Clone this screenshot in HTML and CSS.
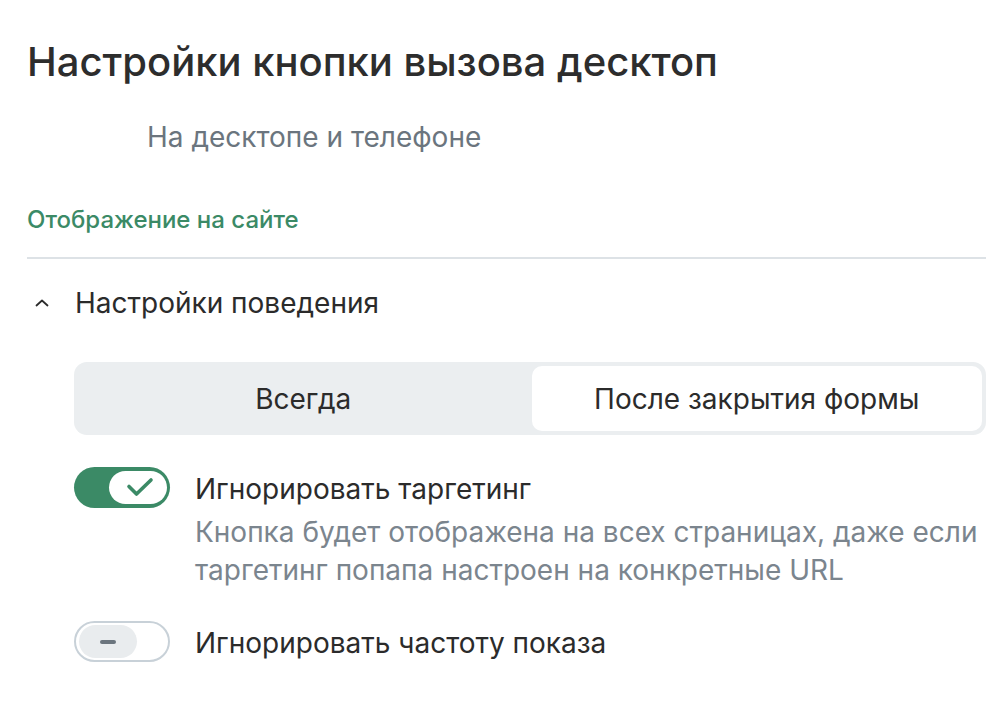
FILE: index.html
```html
<!DOCTYPE html>
<html lang="ru">
<head>
<meta charset="utf-8">
<title>Настройки кнопки вызова десктоп</title>
<link rel="stylesheet" href="styles.css">
</head>
<body>
<main class="page">
  <h1 class="title">Настройки кнопки вызова десктоп</h1>
  <p class="subtitle">На десктопе и телефоне</p>
  <a class="link" href="#">Отображение на сайте</a>
  <hr class="divider">
  <section class="group">
    <div class="group-head">
      <svg class="chevron" width="14" height="8" viewBox="0 0 14 8"><path d="M1.5 6.5 L7 1.5 L12.5 6.5" fill="none" stroke="#2b2b2b" stroke-width="1.8" stroke-linecap="round" stroke-linejoin="round"/></svg>
      <span class="group-title">Настройки поведения</span>
    </div>
    <div class="group-body">
      <div class="segmented">
        <button class="seg">Всегда</button>
        <button class="seg seg-active">После закрытия формы</button>
      </div>
      <div class="option">
        <span class="toggle toggle-on">
          <span class="knob">
            <svg class="check" width="28" height="22" viewBox="0 0 28 22"><path d="M3 9.5 L10.5 17 L25 3" fill="none" stroke="#3b8a66" stroke-width="3.6" stroke-linecap="round" stroke-linejoin="round"/></svg>
          </span>
        </span>
        <div class="option-text">
          <div class="option-label">Игнорировать таргетинг</div>
          <div class="option-desc">Кнопка будет отображена на всех страницах, даже если таргетинг попапа настроен на конкретные URL</div>
        </div>
      </div>
      <div class="option">
        <span class="toggle toggle-off">
          <span class="knob"><span class="dash"></span></span>
        </span>
        <div class="option-text">
          <div class="option-label">Игнорировать частоту показа</div>
        </div>
      </div>
    </div>
  </section>
</main>
</body>
</html>
```
FILE: styles.css
```css
* { box-sizing: border-box; }
html, body { margin: 0; padding: 0; background: #ffffff; }
body {
  font-family: Inter, "Noto Sans", "Liberation Sans", sans-serif;
  color: #2b2b2b;
}
.page {
  padding: 34px 18px 0 27px;
  width: 1004px;
}
.title {
  margin: 0;
  font-size: 40px;
  font-weight: 500;
  line-height: 56px;
  color: #2d2d2d;
}
.subtitle {
  margin: 28px 0 0 120px;
  font-size: 28px;
  line-height: 38px;
  color: #6b757e;
}
.link {
  display: block;
  margin-top: 48px;
  font-size: 24px;
  line-height: 32px;
  color: #3b8a66;
  text-decoration: none;
  font-weight: 500;
}
.divider {
  margin: 21px 0 0 0;
  border: 0;
  border-top: 2px solid #dde2e6;
  width: 959px;
}
.group-head {
  display: flex;
  align-items: center;
  margin-top: 25px;
  height: 38px;
}
.chevron { margin-left: 8px; margin-right: 26px; }
.group-title { font-size: 28px; line-height: 38px; color: #2b2b2b; }
.group-body {
  padding-left: 47px;
  margin-top: 40px;
}
.segmented {
  display: flex;
  gap: 3px;
  padding: 4px;
  background: #ebeef0;
  border-radius: 13px;
  width: 912px;
  height: 73px;
}
.seg {
  flex: 1;
  border: 0;
  background: transparent;
  font-family: inherit;
  font-size: 28px;
  color: #2b2b2b;
  border-radius: 10px;
  cursor: pointer;
}
.seg-active { background: #ffffff; }
.option {
  display: flex;
  align-items: flex-start;
  margin-top: 32px;
  gap: 25px;
}
.toggle {
  flex: none;
  display: flex;
  align-items: center;
  width: 96px;
  height: 41px;
  border-radius: 21px;
  padding: 4px;
}
.toggle-on { background: #3b8a66; justify-content: flex-end; padding-right: 3px; }
.toggle-off { background: #fff; border: 2px solid #c8d1d8; padding: 3px; }
.knob {
  width: 58px;
  height: 33px;
  border-radius: 17px;
  display: flex;
  align-items: center;
  justify-content: center;
}
.check { margin-left: 4px; }
.toggle-on .knob { background: #ffffff; }
.toggle-off .knob { background: #e9ecee; }
.dash {
  width: 16px;
  height: 4px;
  border-radius: 2px;
  background: #6b757e;
}
.option-text { padding-top: 3px; flex: 1; }
.option-label { font-size: 28px; line-height: 38px; color: #2b2b2b; }
.option-desc {
  font-size: 28px;
  line-height: 38px;
  color: #7b858e;
  margin-top: 5px;
}
```
